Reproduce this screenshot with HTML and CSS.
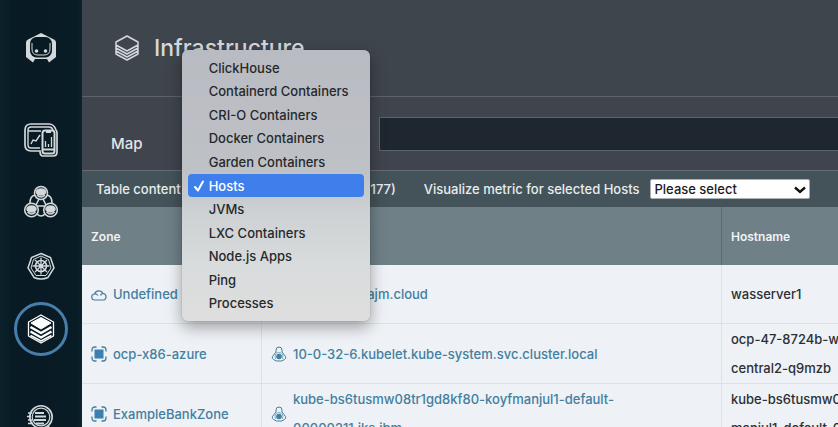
FILE: index.html
```html
<!DOCTYPE html>
<html lang="en">
<head>
<meta charset="utf-8">
<meta name="viewport" content="width=device-width, initial-scale=1">
<title>Infrastructure</title>
<link rel="stylesheet" href="styles.css">
</head>
<body>
<svg class="defs" aria-hidden="true">
  <symbol id="zone" viewBox="0 0 16 16">
    <rect x="3.500" y="3.500" width="9" height="9" fill="#3b80b0"/>
    <path d="M1 5.500V4q0-3 3-3h1.500M10.500 1H12q3 0 3 3v1.500M15 10.500V12q0 3-3 3h-1.500M5.500 15H4q-3 0-3-3v-1.500" fill="none" stroke="currentColor" stroke-width="1.300"/>
  </symbol>
  <symbol id="linux" viewBox="0 0 16 16">
    <path d="M5 6V4a3 3 0 0 1 6 0v2l3.500 4.500q1 2-1 3l-3 1.500h-5l-3-1.500q-2-1-1-3z" fill="none" stroke="currentColor" stroke-width="1"/>
    <path d="M4.500 13q-1.500-6.500 3.500-6.500T11.500 13" fill="none" stroke="currentColor" stroke-width=".6"/>
    <circle cx="8" cy="10.500" r="2.800" fill="currentColor"/>
  </symbol>
  <symbol id="cloud" viewBox="0 0 16 16">
    <path d="M4 13a3 3 0 0 1-.5-6A4.600 4.600 0 0 1 12 6.500a3.300 3.300 0 0 1 .5 6.500zM3.500 7q2-.5 3.500 1.500M12 6.500q-2 0-2.500 2" fill="none" stroke="currentColor" stroke-width="1.200"/>
  </symbol>
</svg>
<div class="app">
  <nav class="sidebar" aria-label="Main">
    <a class="nav-item nav-logo" href="#" aria-label="Home">
      <svg viewBox="0 0 34 34"><path fill="currentColor" d="m17 2 13 6.500q2 1 2 3V26l-7 5.500-2-3.500H11l-2 3.500L2 26V11.500q0-2 2-3z"/><rect x="6" y="6" width="22" height="20.500" rx="6.500" fill="#081b24"/><path d="M8 12v6q0 6 6 6h6q6 0 6-6v-6" fill="none" stroke="currentColor" stroke-width="1"/><circle cx="12.500" cy="20" r="1.800" fill="currentColor"/><circle cx="21.500" cy="20" r="1.800" fill="currentColor"/></svg>
    </a>
    <a class="nav-item nav-apps" href="#" aria-label="Websites and mobile apps">
      <svg viewBox="0 0 36 36" fill="none" stroke="currentColor"><path stroke-width="1.700" d="M17 29H8q-6 0-6-6V8q0-6 6-6h18q5 0 7 6 1 1 1 3v19q0 4-4 4H20q-3 0-3-5z"/><path stroke-width="1.400" d="M17 26H8q-3 0-3-3V8q0-3 3-3h18q3 0 4 3M5 9h13M8 22l2-4 3 1 4-6"/><rect x="19.500" y="8.500" width="12" height="23" rx="2.500" stroke-width="2"/><path stroke-width="1.800" d="M23 10h5M19.500 27.500h12"/><path stroke-width="1.300" d="M22.500 25v-6M25.500 25v-3M28.500 25V15"/></svg>
    </a>
    <a class="nav-item nav-services" href="#" aria-label="Applications">
      <svg viewBox="0 0 36 36" fill="none" stroke="currentColor" stroke-width="1.600"><circle cx="18" cy="9" r="6.500"/><circle cx="8.500" cy="26" r="6.800"/><circle cx="27.500" cy="26" r="6.800"/><path d="M12 11q-5 1-5 8M24 11q5 1 5 8M14 30q4 4 8 0M14 22h8M16 15l-3 6M20 15l3 6"/><g fill="currentColor"><ellipse cx="18" cy="8" rx="4.500" ry="3"/><ellipse cx="8.500" cy="25" rx="4.500" ry="3"/><ellipse cx="27.500" cy="25" rx="4.500" ry="3"/></g><path d="M14 11q4 4 8 0M4.500 28q4 4 8 0M23.500 28q4 4 8 0"/></svg>
    </a>
    <a class="nav-item nav-kube" href="#" aria-label="Kubernetes">
      <svg viewBox="0 0 28 28" fill="none" stroke="currentColor"><path stroke-width="1.500" d="m14 1.500 9.500 4L27 16l-6 9.500q-7 3-14 0L1 16 4.500 5.500z"/><path stroke-width="1" d="m14 4 7.500 3.500L24 16l-5 7.500H9L4 16l2.500-8.500z"/><circle cx="14" cy="14" r="5.500" stroke-width="1.600"/><circle cx="14" cy="14" r="1.500" fill="currentColor"/><path stroke-width="1.300" d="M14 5.500v17M5.500 14h17M8 8l12 12M20 8 8 20"/></svg>
    </a>
    <a class="nav-item nav-infra" href="#" aria-label="Infrastructure" aria-current="page">
      <svg viewBox="0 0 28 30" stroke="currentColor" stroke-linejoin="round"><path fill="none" stroke-width="1.300" d="m14 1 12.500 7v14L14 29 1.500 22V8z"/><path fill="currentColor" d="m14 3.500 10 5.500-10 6L4 9z"/><path fill="none" stroke-width="2.400" d="m3.500 13 10.500 6 10.500-6M3.500 17.500l10.500 6 10.500-6"/><path fill="none" stroke-width="1.500" d="M3.500 21.500 14 27l10.500-5.500"/></svg>
    </a>
    <a class="nav-item nav-analytics" href="#" aria-label="Analytics">
      <svg viewBox="0 0 36 36" fill="none" stroke="currentColor"><circle cx="18" cy="13" r="11.200" stroke-width="1.600"/><circle cx="18" cy="13" r="8.800" stroke-width="1.200"/><path stroke-width="1.800" d="M12 9h9M12 12.500h11M11 16h12M13 19.500h8"/><path stroke-width="1.600" d="M5 9h4M4 12.500h4M5 16h4M5 19.500h5M25 22l6 7-2 2-7-6"/></svg>
    </a>
  </nav>
  <main class="content">
    <header class="page-header">
      <svg class="title-icon" viewBox="0 0 24 26" fill="none" stroke="currentColor" stroke-width="1.500" stroke-linejoin="round"><path d="m12 1 11 6v6l-11 6-11-6V7zM1 13v6l11 6 11-6v-6M1 16l11 6 11-6M1 10l11 6 11-6"/></svg>
      <h1>Infrastructure</h1>
    </header>
    <div class="tabs">
      <a class="tab" href="#">Map</a>
      <input class="search" type="text" aria-label="Search">
    </div>
    <div class="toolbar">
      <label for="content-type">Table content</label>
      <div class="picker">
        <select id="content-type"><option>Hosts</option></select>
        <div class="menu" role="listbox" aria-label="Table content">
          <button type="button" role="option">ClickHouse</button>
          <button type="button" role="option">Containerd Containers</button>
          <button type="button" role="option">CRI-O Containers</button>
          <button type="button" role="option">Docker Containers</button>
          <button type="button" role="option">Garden Containers</button>
          <button type="button" role="option" class="selected" aria-selected="true"><svg viewBox="0 0 12 12" fill="none" stroke="currentColor" stroke-width="2" stroke-linecap="round" stroke-linejoin="round"><path d="m2 7 3 3.500L10 1.500"/></svg>Hosts</button>
          <button type="button" role="option">JVMs</button>
          <button type="button" role="option">LXC Containers</button>
          <button type="button" role="option">Node.js Apps</button>
          <button type="button" role="option">Ping</button>
          <button type="button" role="option">Processes</button>
        </div>
      </div>
      <span class="count">(177)</span>
      <label class="metric-label" for="metric">Visualize metric for selected Hosts</label>
      <div class="metric">
        <select id="metric"><option>Please select</option></select>
        <svg viewBox="0 0 12 8" fill="none" stroke="currentColor" stroke-width="2.400"><path d="m1 1.500 5 4.500 5-4.500"/></svg>
      </div>
    </div>
    <div class="table-wrap">
      <table>
        <colgroup><col class="col-zone"><col class="col-name"><col class="col-host"></colgroup>
        <thead><tr><th>Zone</th><th></th><th>Hostname</th></tr></thead>
        <tbody>
          <tr>
            <td><a class="entity" href="#"><svg><use href="#cloud"/></svg><span>Undefined</span></a></td>
            <td><a class="entity" href="#"><svg><use href="#linux"/></svg><span>wasserver1.ajm.cloud</span></a></td>
            <td>wasserver1</td>
          </tr>
          <tr>
            <td><a class="entity" href="#"><svg><use href="#zone"/></svg><span>ocp-x86-azure</span></a></td>
            <td><a class="entity" href="#"><svg><use href="#linux"/></svg><span>10-0-32-6.kubelet.kube-system.svc.cluster.local</span></a></td>
            <td>ocp-47-8724b-w<br>central2-q9mzb</td>
          </tr>
          <tr>
            <td><a class="entity" href="#"><svg><use href="#zone"/></svg><span>ExampleBankZone</span></a></td>
            <td><a class="entity" href="#"><svg><use href="#linux"/></svg><span>kube-bs6tusmw08tr1gd8kf80-koyfmanjul1-default-<br>00000211.iks.ibm</span></a></td>
            <td>kube-bs6tusmw0<br>manjul1-default-0</td>
          </tr>
        </tbody>
      </table>
    </div>
  </main>
</div>
</body>
</html>
```

FILE: styles.css
```css
* { box-sizing: border-box; }
body {
  margin: 0;
  overflow: hidden;
  background: #eef1f5;
  color: #2b2f33;
  font: 500 13px/29px Inter, "Liberation Sans", sans-serif;
}
a { color: inherit; text-decoration: none; }
button, input, select { font: inherit; }
.defs { position: absolute; width: 0; height: 0; }
.app { display: flex; height: 100vh; overflow: hidden; }

.sidebar {
  flex: none;
  width: 82px;
  display: flex;
  flex-direction: column;
  align-items: center;
  padding-top: 31px;
  background: linear-gradient(90deg, #0c222b, #081b24 12px, #081c25 76px, #0b222c);
  color: #d3d8da;
}
.nav-item { flex: none; display: flex; align-items: center; justify-content: center; }
.nav-item svg { width: 36px; height: 36px; }
.nav-logo svg { width: 34px; height: 34px; }
.nav-apps { margin-top: 57px; }
.nav-services { margin-top: 26px; }
.nav-kube { margin-top: 32px; }
.nav-kube svg { width: 28px; height: 28px; }
.nav-infra {
  width: 54px;
  height: 54px;
  margin-top: 22px;
  border: 3px solid #477eac;
  border-radius: 50%;
  color: #fff;
}
.nav-infra svg { width: 28px; height: 30px; }
.nav-analytics { margin-top: 48px; }

.content { flex: 1; min-width: 0; background: #eef1f5; }
.page-header {
  display: flex;
  align-items: center;
  gap: 15px;
  height: 97px;
  padding-left: 33px;
  border-bottom: 1px solid #5b646b;
  background: #3f454c;
  color: #d5d8dc;
}
.title-icon { width: 24px; height: 26px; }
h1 { margin: 0; font-size: 23px; font-weight: 550; line-height: 28px; }
.tabs {
  display: flex;
  height: 74px;
  padding-left: 29px;
  border-bottom: 1px solid #646f75;
  background: #40444d;
  color: #e2e4e7;
}
.tab { width: 268px; padding-top: 32px; font-size: 15px; }
.search {
  flex: 1;
  min-width: 0;
  height: 34px;
  margin-top: 20px;
  border: 1px solid #5b646c;
  border-right: 0;
  background: #1e272f;
  color: #fff;
}
.toolbar {
  display: flex;
  align-items: center;
  height: 36px;
  padding-left: 14px;
  background: #44535a;
  color: #e8ecee;
  white-space: nowrap;
}
.picker { position: relative; width: 174px; margin-left: 1px; padding-left: 8px; }
.picker select { width: 160px; height: 20px; display: block; }
.menu {
  position: absolute;
  z-index: 2;
  left: 0;
  top: -129px;
  width: 188px;
  height: 271px;
  padding: 6px;
  display: flex;
  flex-direction: column;
  border-radius: 6px;
  background: linear-gradient(#b9bbc2, #bec1c6 45%, #cdd1d3 60%, #d9dcdd 80%, #dedede);
  box-shadow: 0 6px 16px rgba(0, 0, 0, .35), 0 0 1px rgba(0, 0, 0, .5);
}
.menu button {
  position: relative;
  flex: 1;
  padding: 0 0 0 21px;
  border: 0;
  border-radius: 4px;
  background: none;
  color: #26282c;
  line-height: 20px;
  text-align: left;
}
.menu .selected { background: #3f7feb; color: #fff; }
.menu svg { position: absolute; left: 5px; top: 6px; width: 12px; height: 12px; }
.count { margin-left: 10px; }
.metric-label { margin-left: 28px; }
.metric { position: relative; margin-left: 10px; }
.metric select {
  display: block;
  width: 160px;
  height: 20px;
  padding: 0 4px;
  appearance: none;
  border: 1px solid #aab1b5;
  border-radius: 2px;
  background: #fff;
  color: #1c1c1c;
  line-height: 18px;
}
.metric svg { position: absolute; right: 4px; top: 7px; width: 12px; height: 8px; color: #111; pointer-events: none; }

.table-wrap { overflow: hidden; }
table { width: calc(100% + 80px); border-collapse: separate; border-spacing: 0; table-layout: fixed; }
.col-zone { width: 179px; }
.col-name { width: 460px; }
th {
  height: 58px;
  padding: 0 9px;
  border-left: 1px solid #5c6c73;
  background: #6f8087;
  color: #f0f3f4;
  font-size: 12px;
  font-weight: 600;
  text-align: left;
}
td {
  height: 59px;
  padding: 1px 9px 0;
  border-left: 1px solid #dce1e6;
  border-bottom: 1px solid #dce1e6;
  white-space: nowrap;
  overflow: hidden;
}
th:first-child, td:first-child { border-left: 0; }
.entity { display: flex; align-items: center; gap: 6px; color: #437f9f; }
.entity svg { flex: none; width: 16px; height: 16px; }
```
